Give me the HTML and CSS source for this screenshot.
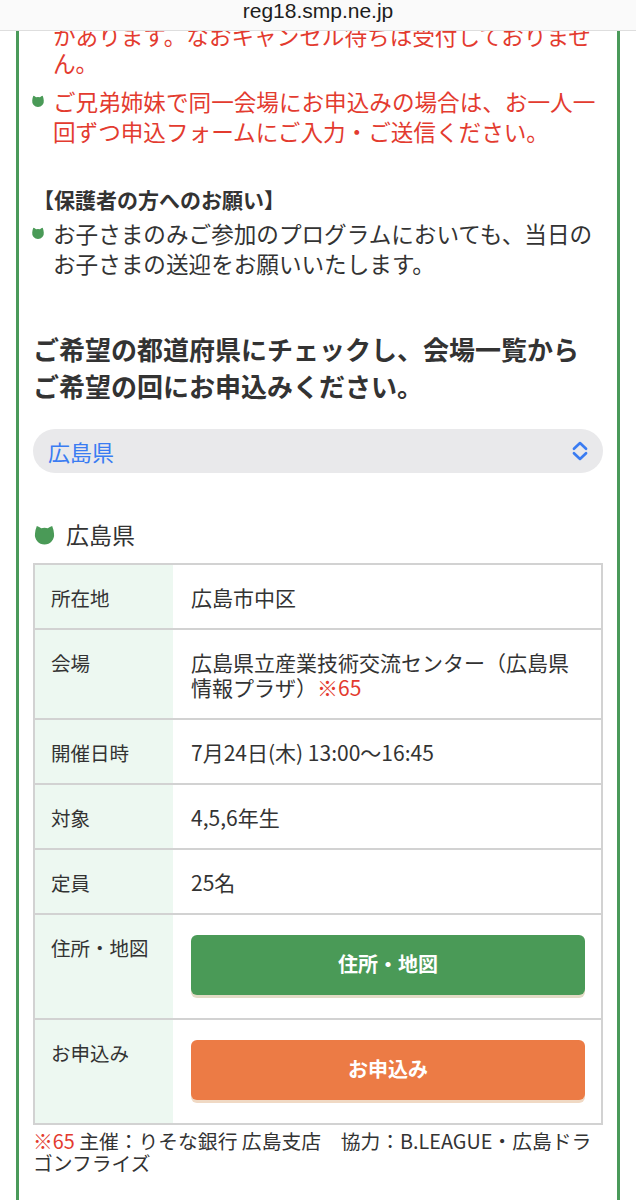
FILE: index.html
```
<!DOCTYPE html>
<html lang="ja">
<head>
    <meta charset="UTF-8">
    <meta name="viewport" content="width=device-width, initial-scale=1.0">
    <title>会場一覧</title>
    <link rel="stylesheet" href="styles.css">
</head>
<body>

    <div class="urlbar">reg18.smp.ne.jp</div>

    <div class="page">
        <div class="box">
            <ul class="notes red">
                <li class="cont">かあります。なおキャンセル待ちは受付しておりません。</li>
                <li>
                    <svg class="cat" viewBox="0 0 24 24"><path d="M4 3 Q6.5 3.8 8.6 5.6 A10 10 0 0 1 15.4 5.6 Q17.5 3.8 20 3 Q21.6 6.8 21.9 11 A10 10 0 1 1 2.1 11 Q2.4 6.8 4 3 Z"/></svg>
                    ご兄弟姉妹で同一会場にお申込みの場合は、お一人一回ずつ申込フォームにご入力・ご送信ください。
                </li>
            </ul>

            <h3 class="sub">【保護者の方へのお願い】</h3>
            <ul class="notes">
                <li>
                    <svg class="cat" viewBox="0 0 24 24"><path d="M4 3 Q6.5 3.8 8.6 5.6 A10 10 0 0 1 15.4 5.6 Q17.5 3.8 20 3 Q21.6 6.8 21.9 11 A10 10 0 1 1 2.1 11 Q2.4 6.8 4 3 Z"/></svg>
                    お子さまのみご参加のプログラムにおいても、当日のお子さまの送迎をお願いいたします。
                </li>
            </ul>

            <h2 class="lead">ご希望の都道府県にチェックし、会場一覧から<br>ご希望の回にお申込みください。</h2>

            <div class="select">
                <span>広島県</span>
                <svg class="updown" viewBox="0 0 16 20"><path d="M2.5 8 L8 2.8 L13.5 8 M2.5 12 L8 17.2 L13.5 12"/></svg>
            </div>

            <h3 class="pref">
                <svg class="cat big" viewBox="0 0 24 24"><path d="M4 3 Q6.5 3.8 8.6 5.6 A10 10 0 0 1 15.4 5.6 Q17.5 3.8 20 3 Q21.6 6.8 21.9 11 A10 10 0 1 1 2.1 11 Q2.4 6.8 4 3 Z"/></svg>
                広島県
            </h3>

            <table class="venue">
                <tr>
                    <th>所在地</th>
                    <td>広島市中区</td>
                </tr>
                <tr>
                    <th>会場</th>
                    <td>広島県立産業技術交流センター（広島県情報プラザ）<span class="mark">※65</span></td>
                </tr>
                <tr>
                    <th>開催日時</th>
                    <td>7月24日(木) 13:00〜16:45</td>
                </tr>
                <tr>
                    <th>対象</th>
                    <td>4,5,6年生</td>
                </tr>
                <tr>
                    <th>定員</th>
                    <td>25名</td>
                </tr>
                <tr>
                    <th>住所・地図</th>
                    <td class="btn-cell"><a class="btn map" href="#">住所・地図</a></td>
                </tr>
                <tr>
                    <th>お申込み</th>
                    <td class="btn-cell"><a class="btn apply" href="#">お申込み</a></td>
                </tr>
            </table>

            <p class="footnote"><span class="mark">※65</span> 主催：りそな銀行 広島支店　協力：B.LEAGUE・広島ドラゴンフライズ</p>
        </div>
    </div>

</body>
</html>
```

FILE: styles.css
```
*{
    margin: 0;
    padding: 0;
    box-sizing: border-box;
}

body{
    background-color: white;
    color: #333;
    font-family: "Noto Sans CJK JP", "Noto Sans", sans-serif;
}

.urlbar{
    position: absolute;
    top: 0;
    left: 0;
    width: 100%;
    height: 31px;
    background-color: #fafafa;
    border-bottom: 1px solid #dedede;
    text-align: center;
    font-family: "Liberation Sans", Arial, sans-serif;
    font-size: 21px;
    line-height: 22px;
    color: #1d1d1d;
    z-index: 2;
}

.box{
    margin: 0 16px;
    border: 3px solid #4a9a5a;
    border-top: none;
    padding: 22px 14px 60px;
}

.notes{
    list-style: none;
    font-size: 22.6px;
    line-height: 30px;
}

.notes li{
    position: relative;
    padding-left: 20px;
    margin-bottom: 8px;
}

.notes li.cont{
    line-height: 27px;
    margin-bottom: 11px;
}

.red{
    color: #e33b2f;
}

.cat{
    position: absolute;
    left: -2px;
    top: 7px;
    width: 14px;
    height: 14px;
    fill: #4a9a57;
}

.sub{
    margin-top: 37px;
    margin-bottom: 5px;
    font-size: 21px;
    line-height: 30px;
    font-weight: 700;
}

.lead{
    margin-top: 51px;
    font-size: 26px;
    line-height: 37px;
    font-weight: 700;
}

.select{
    margin-top: 25px;
    height: 44px;
    border-radius: 22px;
    background-color: #e9e9eb;
    display: flex;
    align-items: center;
    justify-content: space-between;
    padding: 0 14px 0 15px;
    color: #3a7cf2;
    font-size: 22px;
}

.updown{
    width: 18px;
    height: 22px;
    fill: none;
    stroke: #3a7cf2;
    stroke-width: 2.4;
    stroke-linecap: round;
    stroke-linejoin: round;
}

.pref{
    margin-top: 46px;
    display: flex;
    align-items: center;
    gap: 10px;
    font-size: 23px;
    font-weight: 400;
    line-height: 30px;
}

.cat.big{
    position: static;
    width: 23px;
    height: 25px;
}

.venue{
    margin-top: 14px;
    width: 100%;
    border-collapse: collapse;
    border: 2px solid #d2d2d2;
}

.venue th,
.venue td{
    border-top: 2px solid #d2d2d2;
    vertical-align: top;
    text-align: left;
    padding: 20px 16px 18px 16px;
    line-height: 25px;
}

.venue th{
    width: 139px;
    background-color: #edf8f1;
    font-size: 19.5px;
    font-weight: 400;
}

.venue td{
    font-size: 21px;
    padding-left: 18px;
}

.venue td.btn-cell{
    padding-top: 20px;
    padding-bottom: 23px;
}

.mark{
    color: #e33b2f;
}

.btn{
    display: block;
    height: 60px;
    border-radius: 6px;
    color: white;
    font-size: 20px;
    font-weight: 700;
    text-align: center;
    line-height: 58px;
    text-decoration: none;
}

.map{
    background-color: #4a9a57;
    box-shadow: 0 3px 0 #e3dbc6;
}

.apply{
    background-color: #ec7b45;
    box-shadow: 0 3px 0 #f0d9c4;
}

.footnote{
    margin-top: 5px;
    font-size: 19.8px;
    line-height: 22px;
}
```
